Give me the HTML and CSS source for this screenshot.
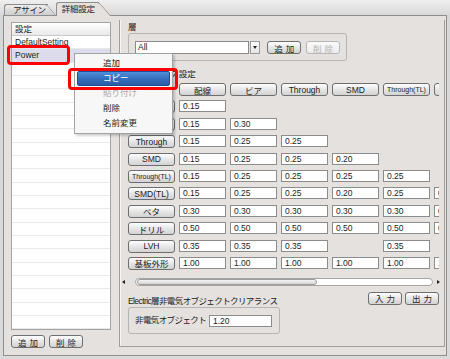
FILE: index.html
```html
<!DOCTYPE html>
<html>
<head>
    <meta charset="utf-8">
    <title>詳細設定</title>
    <link rel="stylesheet" href="styles.css">
</head>
<body>
    <div class="window">
        <div class="tabs">
            <div class="tab">アサイン</div>
            <div class="tab active">詳細設定</div>
        </div>
        <div class="pane">
            <div class="left">
                <div class="list">
                    <div class="list-head">設定</div>
                    <div class="list-body">
                        <div class="list-item">DefaultSetting</div>
                        <div class="list-item selected">Power</div>
                    </div>
                </div>
                <div class="btn-row">
                    <div class="btn spaced">追加</div>
                    <div class="btn spaced">削除</div>
                </div>
            </div>
            <div class="splitter"></div>
            <div class="right">
                <div class="label layer-label">層</div>
                <div class="group layer-group">
                    <div class="select">
                        <div class="select-text">All</div>
                        <div class="select-arrow"><span class="tri-down"></span></div>
                    </div>
                    <div class="btn spaced">追加</div>
                    <div class="btn spaced disabled">削除</div>
                </div>
                <div class="label section-label">クリアランス設定</div>
                <div class="grid-wrap">
                    <div class="grid">
                        <div></div>
                        <div class="btn">配線</div>
                        <div class="btn">ビア</div>
                        <div class="btn">Through</div>
                        <div class="btn">SMD</div>
                        <div class="btn small">Through(TL)</div>
                        <div class="btn">SMD(TL)</div>

                        <div class="btn">配線</div>
                        <div class="cell">0.15</div>
                        <div></div><div></div><div></div><div></div><div></div>

                        <div class="btn">ビア</div>
                        <div class="cell">0.15</div>
                        <div class="cell">0.30</div>
                        <div></div><div></div><div></div><div></div>

                        <div class="btn">Through</div>
                        <div class="cell">0.15</div>
                        <div class="cell">0.25</div>
                        <div class="cell">0.25</div>
                        <div></div><div></div><div></div>

                        <div class="btn">SMD</div>
                        <div class="cell">0.15</div>
                        <div class="cell">0.25</div>
                        <div class="cell">0.25</div>
                        <div class="cell">0.20</div>
                        <div></div><div></div>

                        <div class="btn small">Through(TL)</div>
                        <div class="cell">0.15</div>
                        <div class="cell">0.25</div>
                        <div class="cell">0.25</div>
                        <div class="cell">0.25</div>
                        <div class="cell">0.25</div>
                        <div></div>

                        <div class="btn">SMD(TL)</div>
                        <div class="cell">0.15</div>
                        <div class="cell">0.25</div>
                        <div class="cell">0.25</div>
                        <div class="cell">0.20</div>
                        <div class="cell">0.25</div>
                        <div class="cell">0.25</div>

                        <div class="btn">ベタ</div>
                        <div class="cell">0.30</div>
                        <div class="cell">0.30</div>
                        <div class="cell">0.30</div>
                        <div class="cell">0.30</div>
                        <div class="cell">0.30</div>
                        <div class="cell">0.30</div>

                        <div class="btn">ドリル</div>
                        <div class="cell">0.50</div>
                        <div class="cell">0.50</div>
                        <div class="cell">0.50</div>
                        <div class="cell">0.50</div>
                        <div class="cell">0.50</div>
                        <div class="cell">0.50</div>

                        <div class="btn">LVH</div>
                        <div class="cell">0.35</div>
                        <div class="cell">0.35</div>
                        <div class="cell">0.35</div>
                        <div></div>
                        <div class="cell">0.35</div>
                        <div></div>

                        <div class="btn">基板外形</div>
                        <div class="cell">1.00</div>
                        <div class="cell">1.00</div>
                        <div class="cell">1.00</div>
                        <div class="cell">1.00</div>
                        <div class="cell">1.00</div>
                        <div class="cell">1.00</div>
                    </div>
                </div>
                <div class="hscroll">
                    <span class="tri-left"></span>
                    <div class="track"><div class="thumb"></div></div>
                    <span class="tri-right"></span>
                </div>
                <div class="bottom-row">
                    <div class="label jp">Electric層非電気オブジェクトクリアランス</div>
                    <div class="io-buttons">
                        <div class="btn wide">入力</div>
                        <div class="btn wide">出力</div>
                    </div>
                </div>
                <div class="group nonelec-group">
                    <div class="label jp nonelec-label">非電気オブジェクト</div>
                    <div class="cell nonelec-cell">1.20</div>
                </div>
            </div>
        </div>

        <div class="mark mark-power"></div>
        <div class="menu">
            <div class="menu-item">追加</div>
            <div class="menu-item active">コピー</div>
            <div class="menu-item disabled">貼り付け</div>
            <div class="menu-item">削除</div>
            <div class="menu-item">名前変更</div>
        </div>
        <div class="mark mark-copy"></div>
    </div>
</body>
</html>
```

FILE: styles.css
```css
body {
    margin: 0;
    padding: 0;
    font-family: "Liberation Sans", "Noto Sans CJK JP", sans-serif;
    font-size: 8.5px;
    color: #1c1c1c;
}
.window {
    position: relative;
    width: 450px;
    height: 359px;
    overflow: hidden;
    background: linear-gradient(#efefef, #d7d7d7 16px, #dadada);
}

/* tabs */
.tabs {
    display: flex;
    align-items: flex-end;
    height: 15px;
    padding-left: 4px;
}
.tab {
    position: relative;
    z-index: 1;
    height: 10px;
    line-height: 10px;
    padding: 0 2px 0 8px;
    background: linear-gradient(#eeeeee, #cdcdcd);
    border: 1px solid #8d8d8d;
    border-right: none;
    border-bottom: none;
    border-radius: 3px 0 0 0;
    letter-spacing: -0.3px;
}
.tab::after {
    content: "";
    position: absolute;
    z-index: -1;
    top: -1px;
    bottom: 0;
    right: -8px;
    width: 12px;
    background: inherit;
    border-top: 1px solid #8d8d8d;
    border-right: 1px solid #8d8d8d;
    border-radius: 0 3px 0 0;
    transform: skewX(40deg);
    transform-origin: bottom left;
}
.tab.active {
    z-index: 2;
    height: 13px;
    line-height: 13px;
    margin-left: 8px;
    margin-bottom: -1px;
    padding: 0 4px 0 5px;
    background: #e4e1de;
}
.tab.active::after {
    right: -12px;
    width: 14px;
}

/* main pane */
.pane {
    display: flex;
    box-sizing: border-box;
    height: 341px;
    margin: 0 3px;
    border: 1px solid #8e8e8e;
    background: #e4e1de;
}
.left {
    display: flex;
    flex-direction: column;
    box-sizing: border-box;
    width: 110px;
    padding: 6px 1px 0 7px;
}
.list {
    display: flex;
    flex-direction: column;
    box-sizing: border-box;
    height: 308px;
    border: 1px solid #a3a3a3;
    background: #fff;
}
.list-head {
    height: 12px;
    line-height: 12px;
    padding-left: 3px;
    background: linear-gradient(#ffffff, #e9e9e9);
    border-bottom: 1px solid #c9c9c9;
}
.list-body {
    flex: 1;
    background-image: repeating-linear-gradient(to bottom, transparent 0, transparent 12.33px, #e9e9e9 12.33px, #e9e9e9 13.33px);
}
.list-item {
    height: 12.33px;
    line-height: 12px;
    padding-left: 3px;
    border-bottom: 1px solid #e9e9e9;
}
.list-item.selected {
    background: #dcdcec;
}
.btn-row {
    display: flex;
    gap: 4px;
    margin-top: 5px;
}
.btn-row .btn {
    width: 34px;
}
.splitter {
    width: 7px;
}

/* buttons and fields */
.btn {
    display: flex;
    align-items: center;
    justify-content: center;
    box-sizing: border-box;
    height: 13px;
    border: 1px solid #6e6e6e;
    border-radius: 3px;
    background: linear-gradient(#fefefe, #e6e6e6 50%, #d3d3d3);
    white-space: nowrap;
    overflow: hidden;
}
.btn.spaced {
    letter-spacing: 3px;
    padding-left: 3px;
}
.btn.small {
    font-size: 7px;
}
.btn.disabled {
    border-color: #b7b7b7;
    color: #b3b3b3;
    background: linear-gradient(#fbfbfb, #ececec);
}
.cell {
    box-sizing: border-box;
    height: 12px;
    line-height: 10px;
    padding-left: 3px;
    border: 1px solid #8c8c8c;
    background: #fff;
    white-space: nowrap;
    overflow: hidden;
}
.label {
    line-height: 11px;
    white-space: nowrap;
}
.jp {
    letter-spacing: -0.6px;
}
.group {
    box-sizing: border-box;
    border: 1px solid #b5b5b5;
    border-radius: 3px;
}

/* right panel */
.right {
    flex: 1;
    display: flex;
    flex-direction: column;
    margin: 4px 1px 8px 0;
    padding: 0 5px 0 8px;
    border: 1px solid #9f9f9f;
    border-top: none;
    box-shadow: inset 1px 0 0 #f6f6f6;
}
.layer-label {
    margin-top: 2px;
}
.layer-group {
    display: flex;
    align-items: center;
    width: 219px;
    padding: 7px 6px 6px 6px;
}
.select {
    display: flex;
    gap: 1px;
    width: 126px;
    height: 13px;
    margin-right: 7px;
}
.select-text {
    flex: 1;
    box-sizing: border-box;
    line-height: 11px;
    padding-left: 2px;
    border: 1px solid #8a8a8a;
    background: #fff;
}
.select-arrow {
    display: flex;
    align-items: center;
    justify-content: center;
    box-sizing: border-box;
    width: 10px;
    border: 1px solid #9a9a9a;
    background: linear-gradient(#ffffff, #e3e3e3);
}
.tri-down {
    width: 0;
    height: 0;
    border-left: 2.5px solid transparent;
    border-right: 2.5px solid transparent;
    border-top: 3px solid #222;
}
.layer-group .btn {
    width: 34px;
}
.layer-group .btn + .btn {
    margin-left: 5px;
}
.section-label {
    margin-top: 8px;
}
.grid-wrap {
    width: 311px;
    margin-top: 3px;
    overflow: hidden;
}
.grid {
    display: grid;
    grid-template-columns: repeat(7, 47px);
    grid-auto-rows: 13px;
    column-gap: 4px;
    row-gap: 4.4px;
    width: 353px;
}

/* horizontal scroll bar */
.hscroll {
    display: flex;
    align-items: center;
    height: 8px;
    margin: 8px -2px 0 -7px;
}
.tri-left,
.tri-right {
    width: 0;
    height: 0;
    border-top: 2.5px solid transparent;
    border-bottom: 2.5px solid transparent;
}
.tri-left {
    border-right: 3px solid #222;
    margin: 0 10px 0 1px;
}
.tri-right {
    border-left: 3px solid #222;
    margin: 0 1px 0 4px;
}
.track {
    flex: 1;
    box-sizing: border-box;
    height: 8px;
    padding: 0 1px;
    border: 1px solid #a5a5a5;
    border-radius: 4px;
    background: #fff;
}
.thumb {
    box-sizing: border-box;
    width: 180px;
    height: 6px;
    border: 1px solid #9d9d9d;
    border-radius: 3px;
    background: linear-gradient(#f6f6f6, #d4d4d4);
}

.bottom-row {
    display: flex;
    justify-content: space-between;
    align-items: flex-end;
    height: 15px;
    margin-top: 6px;
}
.io-buttons {
    display: flex;
    gap: 3px;
    align-self: flex-start;
}
.btn.wide {
    width: 34px;
    letter-spacing: 3px;
    padding-left: 3px;
}
.nonelec-group {
    display: flex;
    align-items: center;
    width: 152px;
    padding: 7px 7px 6px 6px;
}
.nonelec-label {
    flex: 1;
}
.nonelec-cell {
    width: 63px;
}

/* popup menu and call-out marks */
.menu {
    position: absolute;
    left: 74px;
    top: 53px;
    z-index: 5;
    box-sizing: border-box;
    width: 99px;
    padding: 2px;
    border: 1px solid #a2a2a2;
    background: #f7f7f7;
    box-shadow: 2px 2px 2px rgba(0, 0, 0, 0.18);
}
.menu-item {
    box-sizing: border-box;
    height: 15px;
    line-height: 13px;
    padding-left: 25px;
    border: 1px solid transparent;
    border-radius: 2px;
}
.menu-item.active {
    color: #fff;
    border-color: #1f4f93;
    background: linear-gradient(#4f8fd9, #3670bd 50%, #2a5ca6);
}
.menu-item.disabled {
    color: #a8a8a8;
}
.mark {
    position: absolute;
    z-index: 6;
    box-sizing: border-box;
    border: 3px solid #ff0000;
    border-radius: 4px;
}
.mark-power {
    left: 7px;
    top: 45px;
    width: 63px;
    height: 20px;
}
.mark-copy {
    left: 68px;
    top: 68px;
    width: 110px;
    height: 22px;
}
```
